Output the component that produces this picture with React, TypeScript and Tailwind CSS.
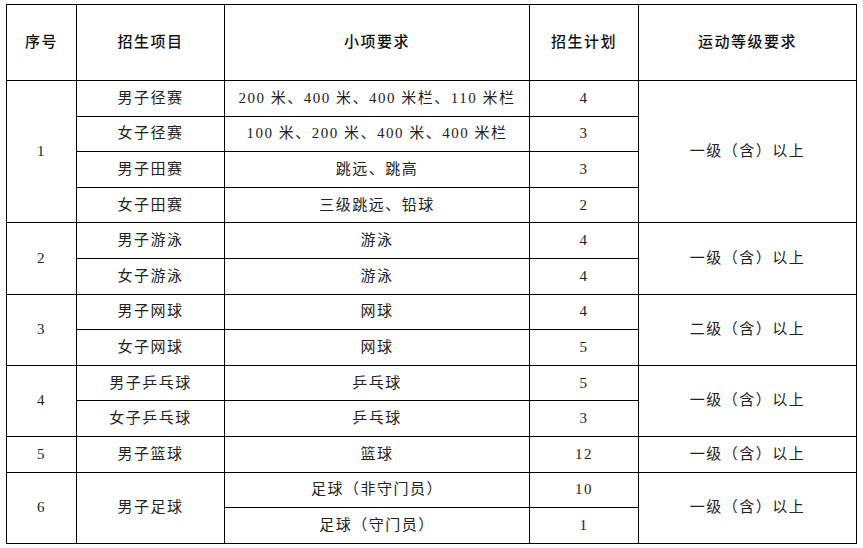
import React from "react";

type Cell = { text: string; rowSpan?: number };

const font = { fontFamily: '"Liberation Serif", "Noto Sans CJK SC", serif' };

const rows: Cell[][] = [
  [{ text: "1", rowSpan: 4 }, { text: "男子径赛" }, { text: "200 米、400 米、400 米栏、110 米栏" }, { text: "4" }, { text: "一级（含）以上", rowSpan: 4 }],
  [{ text: "女子径赛" }, { text: "100 米、200 米、400 米、400 米栏" }, { text: "3" }],
  [{ text: "男子田赛" }, { text: "跳远、跳高" }, { text: "3" }],
  [{ text: "女子田赛" }, { text: "三级跳远、铅球" }, { text: "2" }],
  [{ text: "2", rowSpan: 2 }, { text: "男子游泳" }, { text: "游泳" }, { text: "4" }, { text: "一级（含）以上", rowSpan: 2 }],
  [{ text: "女子游泳" }, { text: "游泳" }, { text: "4" }],
  [{ text: "3", rowSpan: 2 }, { text: "男子网球" }, { text: "网球" }, { text: "4" }, { text: "二级（含）以上", rowSpan: 2 }],
  [{ text: "女子网球" }, { text: "网球" }, { text: "5" }],
  [{ text: "4", rowSpan: 2 }, { text: "男子乒乓球" }, { text: "乒乓球" }, { text: "5" }, { text: "一级（含）以上", rowSpan: 2 }],
  [{ text: "女子乒乓球" }, { text: "乒乓球" }, { text: "3" }],
  [{ text: "5" }, { text: "男子篮球" }, { text: "篮球" }, { text: "12" }, { text: "一级（含）以上" }],
  [{ text: "6", rowSpan: 2 }, { text: "男子足球", rowSpan: 2 }, { text: "足球（非守门员）" }, { text: "10" }, { text: "一级（含）以上", rowSpan: 2 }],
  [{ text: "足球（守门员）" }, { text: "1" }],
];

export default function App() {
  return (
    <div className="w-[863px] h-[548px] bg-white pt-[4px] pl-[6px]" style={font}>
      <table className="border-collapse table-fixed w-[850px] text-[15px] text-[#222]">
        <colgroup>
          <col className="w-[70px]" />
          <col className="w-[148px]" />
          <col className="w-[305px]" />
          <col className="w-[109px]" />
          <col className="w-[218px]" />
        </colgroup>
        <thead>
          <tr className="h-[76px]">
            {["序号", "招生项目", "小项要求", "招生计划", "运动等级要求"].map((h) => (
              <th key={h} className="border border-black font-medium tracking-[1.5px] text-center align-middle text-[#111]">
                {h}
              </th>
            ))}
          </tr>
        </thead>
        <tbody>
          {rows.map((r, i) => (
            <tr key={i} className="h-[35.6px]">
              {r.map((c, j) => (
                <td
                  key={j}
                  rowSpan={c.rowSpan}
                  className="border border-black text-center align-middle tracking-[1.5px] leading-none p-0"
                >
                  {c.text}
                </td>
              ))}
            </tr>
          ))}
        </tbody>
      </table>
    </div>
  );
}
